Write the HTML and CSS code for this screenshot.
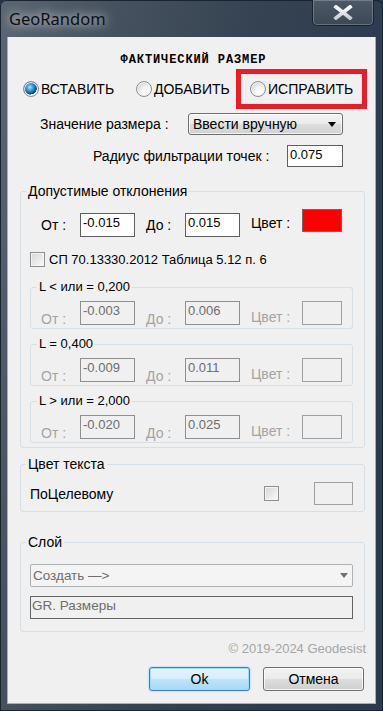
FILE: index.html
```html
<!DOCTYPE html>
<html lang="ru">

<head>
    <meta charset="UTF-8">
    <meta name="viewport" content="width=device-width, initial-scale=1.0">
    <title>GeoRandom</title>
    <link rel="stylesheet" href="styles.css">
</head>

<body>
<div class="window">
    <div class="titlebar">
        <span class="title">GeoRandom</span>
        <span class="close">
            <svg width="20" height="15" viewBox="0 0 20 15">
                <defs>
                    <linearGradient id="xg" x1="0" y1="0" x2="0" y2="1">
                        <stop offset="0" stop-color="#ffffff"/>
                        <stop offset="1" stop-color="#c9ced4"/>
                    </linearGradient>
                </defs>
                <path d="M3 2 L17 13 M17 2 L3 13" stroke="url(#xg)" stroke-width="3.8" stroke-linecap="square" fill="none"/>
            </svg>
        </span>
    </div>

    <div class="client">
        <div class="heading">ФАКТИЧЕСКИЙ РАЗМЕР</div>

        <!-- режим -->
        <div class="modes">
            <label class="radio first"><span class="dot on"></span>ВСТАВИТЬ</label>
            <label class="radio second"><span class="dot"></span>ДОБАВИТЬ</label>
            <span class="mark">
                <label class="radio"><span class="dot"></span>ИСПРАВИТЬ</label>
            </span>
        </div>

        <div class="line size-line">
            <span class="size-label">Значение размера :</span>
            <div class="combo">
                <span>Ввести вручную</span>
                <span class="arrow"></span>
            </div>
        </div>

        <div class="line radius-line">
            <span class="radius-label">Радиус фильтрации точек :</span>
            <div class="box radius-box">0.075</div>
        </div>

        <!-- допуски -->
        <fieldset class="group tolerance">
            <legend>Допустимые отклонения</legend>
            <div class="range main-range">
                <span class="lbl">От :</span>
                <div class="box">-0.015</div>
                <span class="lbl lbl-gap">До :</span>
                <div class="box">0.015</div>
                <span class="lbl lbl-gap color-lbl">Цвет :</span>
                <div class="swatch red"></div>
            </div>

            <label class="check-line">
                <span class="check"></span>
                СП 70.13330.2012 Таблица 5.12 п. 6
            </label>

            <fieldset class="group sub">
                <legend>L &lt; или = 0,200</legend>
                <div class="range off">
                    <span class="lbl">От :</span>
                    <div class="box">-0.003</div>
                    <span class="lbl lbl-gap">До :</span>
                    <div class="box">0.006</div>
                    <span class="lbl lbl-gap color-lbl">Цвет :</span>
                    <div class="swatch"></div>
                </div>
            </fieldset>

            <fieldset class="group sub">
                <legend>L = 0,400</legend>
                <div class="range off">
                    <span class="lbl">От :</span>
                    <div class="box">-0.009</div>
                    <span class="lbl lbl-gap">До :</span>
                    <div class="box">0.011</div>
                    <span class="lbl lbl-gap color-lbl">Цвет :</span>
                    <div class="swatch"></div>
                </div>
            </fieldset>

            <fieldset class="group sub">
                <legend>L &gt; или = 2,000</legend>
                <div class="range off">
                    <span class="lbl">От :</span>
                    <div class="box">-0.020</div>
                    <span class="lbl lbl-gap">До :</span>
                    <div class="box">0.025</div>
                    <span class="lbl lbl-gap color-lbl">Цвет :</span>
                    <div class="swatch"></div>
                </div>
            </fieldset>
        </fieldset>

        <fieldset class="group text-color">
            <legend>Цвет текста</legend>
            <div class="text-row">
                <span class="grow">ПоЦелевому</span>
                <span class="check"></span>
                <div class="swatch"></div>
            </div>
        </fieldset>

        <fieldset class="group layer">
            <legend>Слой</legend>
            <div class="combo off">
                <span>Создать —&gt;</span>
                <span class="arrow"></span>
            </div>
            <div class="box layer-box">GR. Размеры</div>
        </fieldset>

        <div class="copy">© 2019-2024 Geodesist</div>

        <div class="buttons">
            <a class="btn default">Ok</a>
            <a class="btn">Отмена</a>
        </div>
    </div>
</div>
</body>

</html>
```

FILE: styles.css
```css
* {
    margin: 0;
    padding: 0;
    box-sizing: border-box;
}

html, body {
    width: 383px;
    height: 711px;
    overflow: hidden;
}

body {
    font-family: "Liberation Sans", Arial, sans-serif;
    font-size: 14px;
    line-height: 16px;
    color: #000;
    background: #26364a;
}

.window {
    width: 383px;
    height: 711px;
    display: flex;
    flex-direction: column;
    border-radius: 6px 6px 0 0;
    background: linear-gradient(100deg, #5a6672 0%, #46525f 22%, #364352 50%, #2c3b4f 80%, #2a3a4f 100%);
    box-shadow: inset 0 0 0 1px #1a2330;
}

/* заголовок окна */
.titlebar {
    height: 37px;
    display: flex;
    align-items: flex-start;
    justify-content: space-between;
    flex-shrink: 0;
}

.title {
    font-family: "Noto Sans", "Open Sans", sans-serif;
    font-size: 16.5px;
    line-height: 20px;
    padding: 9px 0 0 9px;
    color: #0b0f14;
    text-shadow: 0 0 8px rgba(255, 255, 255, 0.75), 0 0 14px rgba(255, 255, 255, 0.45);
}

.close {
    width: 62px;
    height: 26px;
    margin-right: 9px;
    display: flex;
    align-items: center;
    justify-content: center;
    border: 1px solid rgba(20, 28, 38, 0.9);
    border-top: none;
    border-radius: 0 0 5px 5px;
    box-shadow: inset 0 0 0 1px rgba(255, 255, 255, 0.22);
    background: linear-gradient(#4d5967, #3c4856);
}

.client {
    flex: 1;
    margin: 0 7px 7px 7px;
    padding: 0 8px 0 12px;
    background: #f0f0f0;
    border: 1px solid #a4afba;
    border-top: none;
    display: flex;
    flex-direction: column;
}

.heading {
    margin-top: 16px;
    height: 14px;
    line-height: 14px;
    text-align: center;
    font-family: "Liberation Mono", "DejaVu Sans Mono", monospace;
    font-weight: bold;
    font-size: 12px;
    letter-spacing: 0.9px;
}

/* радиокнопки */
.modes {
    margin-top: 2px;
    height: 40px;
    display: flex;
    align-items: center;
}

.radio {
    display: flex;
    align-items: center;
    gap: 2px;
}

.radio.first {
    margin-left: 3px;
    width: 113px;
}

.radio.second {
    width: 100px;
}

.dot {
    width: 16px;
    height: 16px;
    border-radius: 50%;
    border: 1px solid #8b8d90;
    background: radial-gradient(circle at 65% 70%, #ffffff 0%, #f4f4f4 35%, #cfcfcf 80%, #bdbdbd 100%);
    box-shadow: inset 0 0 0 1px #f6f6f6;
}

.dot.on {
    background:
        radial-gradient(circle at 42% 38%, #bfe6ff 0%, #4fb0ec 20%, #1468b8 45%, #0a3d78 60%, transparent 62%),
        radial-gradient(circle at 65% 70%, #ffffff 0%, #f4f4f4 35%, #cfcfcf 80%, #bdbdbd 100%);
}

.mark {
    width: 131px;
    height: 40px;
    border: 5px solid #ed1c24;
    display: flex;
    align-items: center;
    padding-left: 9px;
}

.line {
    display: flex;
    align-items: center;
    height: 22px;
}

.size-line {
    margin-top: 4px;
}

.size-label {
    margin-left: 20px;
    width: 148px;
}

.combo {
    width: 155px;
    height: 22px;
    border: 1px solid #707070;
    border-radius: 3px;
    background: linear-gradient(#f3f3f3 0%, #ececec 48%, #dddddd 52%, #d2d2d2 100%);
    box-shadow: inset 0 0 0 1px rgba(255, 255, 255, 0.7);
    display: flex;
    align-items: center;
    justify-content: space-between;
    padding: 0 6px 0 4px;
}

.arrow {
    width: 0;
    height: 0;
    border-left: 4.5px solid transparent;
    border-right: 4.5px solid transparent;
    border-top: 5px solid #000;
}

.radius-line {
    margin-top: 10px;
}

.radius-label {
    margin-left: 73px;
    width: 194px;
}

.box {
    width: 55px;
    height: 24px;
    border: 1px solid #5f5f5f;
    background: #fff;
    padding: 1px 2px;
    font-size: 13px;
    line-height: 16px;
}

.radius-box {
    width: 56px;
    height: 22px;
}

/* группы */
.group {
    border: 1px solid #d5dfe5;
    border-radius: 3px;
    margin-right: 2px;
    padding: 0 11px 4px 9px;
}

.group legend {
    margin-left: -4px;
    padding: 0 2px;
    line-height: 16px;
}

.tolerance {
    margin-top: 16px;
}

.range {
    display: flex;
    align-items: flex-start;
}

.main-range {
    margin-top: 10px;
    height: 28px;
    padding-left: 11px;
}

.main-range .box {
    margin-top: 4px;
}

.lbl {
    width: 39px;
    margin-top: 8px;
}

.lbl-gap {
    margin-left: 11px;
}

.color-lbl {
    width: 51px;
    margin-top: 6px;
}

.swatch {
    width: 40px;
    height: 23px;
    border: 1px solid #a0a0a0;
}

.swatch.red {
    background: #ff0000;
    border-color: #6a6a6a;
}

.check-line {
    margin-top: 14px;
    height: 17px;
    display: flex;
    align-items: center;
    gap: 4px;
    font-size: 13px;
}

.check {
    width: 15px;
    height: 15px;
    border: 1px solid #8e8f8f;
    background: linear-gradient(135deg, #d6d6d6 0%, #e8e8e8 50%, #fbfbfb 100%);
    box-shadow: inset 0 0 0 1px #f4f4f4;
    flex-shrink: 0;
}

.sub {
    margin: 11px 0 0 0;
    padding: 0 0 3px 10px;
}

.sub legend {
    font-size: 13px;
}

.sub + .sub {
    margin-top: 7px;
}

.off {
    margin-top: 6px;
    height: 24px;
    color: #a3a3a3;
}

.off .box {
    background: #f0f0f0;
    border-color: #8f8f8f;
    color: #6d6d6d;
}

.off .lbl {
    margin-top: 10px;
}

.off .color-lbl {
    margin-top: 8px;
}

.off .swatch {
    height: 24px;
}

.text-color {
    margin-top: 8px;
    padding-bottom: 6px;
}

.text-row {
    margin-top: 10px;
    height: 23px;
    display: flex;
    align-items: center;
}

.grow {
    flex: 1;
}

.text-row .swatch {
    width: 39px;
    margin-left: 35px;
}

.layer {
    margin-top: 22px;
    padding-bottom: 12px;
}

.combo.off {
    width: 100%;
    height: 23px;
    margin-top: 14px;
    border-color: #adb2b5;
    border-radius: 2px;
    background: #f4f4f4;
    box-shadow: none;
    color: #6d6d6d;
    padding: 0 4px 0 2px;
    font-size: 13.5px;
}

.combo.off .arrow {
    border-top-color: #707070;
}

.layer-box {
    width: 100%;
    height: 23px;
    margin-top: 9px;
    background: #f0f0f0;
    color: #6d6d6d;
    border-color: #646464;
    font-size: 13.5px;
    padding-left: 1px;
}

.copy {
    margin-top: 9px;
    margin-right: 1px;
    text-align: right;
    color: #a5a5a5;
    font-size: 13px;
    line-height: 16px;
}

/* кнопки */
.buttons {
    margin-top: 10px;
    margin-right: 3px;
    display: flex;
    justify-content: flex-end;
    gap: 13px;
}

.btn {
    width: 101px;
    height: 24px;
    border: 1px solid #707070;
    border-radius: 3px;
    display: flex;
    align-items: center;
    justify-content: center;
    color: #000;
    text-decoration: none;
    background: linear-gradient(#f2f2f2 0%, #ebebeb 48%, #dddddd 52%, #cfcfcf 100%);
    box-shadow: inset 0 0 0 1px rgba(255, 255, 255, 0.75);
    cursor: pointer;
}

.btn.default {
    border-color: #3c7fb1;
    background: linear-gradient(#e5f4fc 0%, #d6eefc 48%, #bde4f9 52%, #a7d9f5 100%);
    box-shadow: inset 0 0 0 1px #9ddcf8, 0 0 2px #6fc9f5;
}
```
